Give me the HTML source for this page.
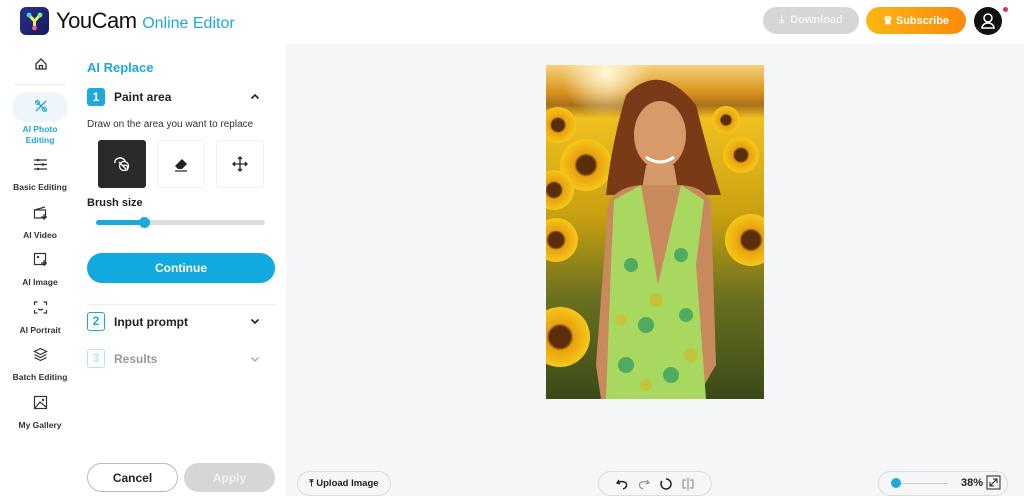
<!DOCTYPE html>
<html><head><style>
*{box-sizing:border-box;margin:0;padding:0}
body{width:1024px;height:496px;overflow:hidden;background:#fff;font-family:"Liberation Sans",sans-serif;position:relative;color:#222}
.abs{position:absolute}
.nav{position:absolute;left:0;width:80px;text-align:center;font-size:8.5px;font-weight:bold;color:#333}
.btn{position:absolute;border-radius:16px;display:flex;align-items:center;justify-content:center;font-weight:bold}
</style></head><body>
<div class="abs" style="left:20px;top:7px;width:29px;height:28px;border-radius:6px;background:linear-gradient(135deg,#2b2f8f,#151a5a)"></div>
<svg class="abs" style="left:20px;top:7px" width="29" height="28"><path d="M9 8 L14.5 14 L20 8 M14.5 14 V21" stroke="#e8f060" stroke-width="3" stroke-linecap="round" fill="none"/><circle cx="9" cy="8" r="2.4" fill="#3fd4e8"/><circle cx="20" cy="8" r="2.4" fill="#7cf07a"/><circle cx="14.5" cy="21" r="2.4" fill="#f05aa0"/></svg>
<div class="abs" style="left:56px;top:8px;font-size:22px;color:#111;letter-spacing:-0.5px">YouCam <span style="font-size:16px;color:#1ea8dc;letter-spacing:0">Online Editor</span></div>
<div class="btn" style="left:763px;top:7px;width:96px;height:27px;background:#d6d6d6;color:#f4f4f4;font-size:11px">⤓&nbsp; Download</div>
<div class="btn" style="left:866px;top:7px;width:100px;height:27px;background:linear-gradient(90deg,#fdb515,#fd8a0a);color:#fff;font-size:11px">♛&nbsp;Subscribe</div>
<div class="abs" style="left:974px;top:7px;width:28px;height:28px;border-radius:50%;background:#111"></div>
<svg class="abs" style="left:974px;top:7px" width="28" height="28"><circle cx="14" cy="11" r="4" stroke="#fff" stroke-width="1.5" fill="none"/><path d="M8 21 a6 5 0 0 1 12 0 Z" stroke="#fff" stroke-width="1.5" fill="none"/></svg>
<div class="abs" style="left:1003px;top:7px;width:5px;height:5px;border-radius:50%;background:#e0306a"></div>
<svg class="abs" style="left:34px;top:57px" width="14" height="14"><path d="M2 7 L7 2 L12 7 V12 H2 Z M5.5 12 V8.5 H8.5 V12" stroke="#333" stroke-width="1.3" fill="none"/></svg>
<div class="abs" style="left:14px;top:84px;width:52px;height:1px;background:#eee"></div>
<div class="abs" style="left:12px;top:92px;width:56px;height:30px;border-radius:15px;background:#eef6fb"></div>
<svg class="abs" style="left:34px;top:99px" width="14" height="14"><path d="M2 2 L12 12 M12 2 L2 12" stroke="#1ea8dc" stroke-width="1.3"/><circle cx="3.5" cy="3.5" r="2" stroke="#1ea8dc" fill="none"/><circle cx="10.5" cy="10.5" r="2" stroke="#1ea8dc" fill="none"/></svg>
<div class="nav" style="top:124px;color:#1ea8dc;line-height:11px">AI Photo<br>Editing</div>
<svg class="abs" style="left:33px;top:157px" width="15" height="15"><path d="M1 3H14M1 7.5H14M1 12H14" stroke="#333" stroke-width="1.2"/><circle cx="5" cy="3" r="1.3" fill="#333"/><circle cx="10" cy="7.5" r="1.3" fill="#333"/><circle cx="5" cy="12" r="1.3" fill="#333"/></svg>
<div class="nav" style="top:182px">Basic Editing</div>
<svg class="abs" style="left:33px;top:205px" width="15" height="15"><rect x="1.5" y="5" width="11" height="8" stroke="#333" fill="none" stroke-width="1.2"/><path d="M1.5 5 L12 2 M11 9 v6 M8 12 h6" stroke="#333" stroke-width="1.2"/></svg>
<div class="nav" style="top:230px">AI Video</div>
<svg class="abs" style="left:33px;top:252px" width="15" height="15"><rect x="1.5" y="1.5" width="11" height="11" stroke="#333" fill="none" stroke-width="1.2"/><circle cx="5" cy="5" r="1.2" fill="#333"/><path d="M11 8 v6 M8 11 h6" stroke="#333" stroke-width="1.3"/></svg>
<div class="nav" style="top:277px">AI Image</div>
<svg class="abs" style="left:33px;top:300px" width="15" height="15"><path d="M1.5 5V2H4.5M10.5 2H13.5V5M13.5 10V13H10.5M4.5 13H1.5V10M5 9 q2.5 2 5 0" stroke="#333" fill="none" stroke-width="1.2"/></svg>
<div class="nav" style="top:325px">AI Portrait</div>
<svg class="abs" style="left:33px;top:347px" width="15" height="15"><path d="M7.5 1.5 L13.5 4.5 L7.5 7.5 L1.5 4.5 Z M1.5 7.5 L7.5 10.5 L13.5 7.5 M1.5 10.5 L7.5 13.5 L13.5 10.5" stroke="#333" fill="none" stroke-width="1.2"/></svg>
<div class="nav" style="top:372px">Batch Editing</div>
<svg class="abs" style="left:33px;top:395px" width="15" height="15"><rect x="1.5" y="1.5" width="12" height="12" stroke="#333" fill="none" stroke-width="1.2"/><path d="M2 13 L7 7 L13 12" stroke="#333" fill="none" stroke-width="1.2"/><circle cx="10" cy="5" r="1.2" fill="#333"/></svg>
<div class="nav" style="top:420px">My Gallery</div>
<div class="abs" style="left:87px;top:60px;font-size:13px;font-weight:bold;color:#1ea8dc">AI Replace</div>
<div class="abs" style="left:87px;top:88px;width:18px;height:18px;border-radius:3px;background:#1ea8dc;color:#fff;font-size:12px;font-weight:bold;text-align:center;line-height:18px">1</div>
<div class="abs" style="left:114px;top:90px;font-size:12px;font-weight:bold">Paint area</div>
<svg class="abs" style="left:250px;top:93px" width="10" height="7"><path d="M1.5 5.5 L5 2 L8.5 5.5" stroke="#222" stroke-width="1.6" fill="none"/></svg>
<div class="abs" style="left:87px;top:119px;font-size:10px;color:#333">Draw on the area you want to replace</div>
<div class="abs" style="left:98px;top:140px;width:48px;height:48px;border-radius:3px;background:#2a2a2a"></div>
<svg class="abs" style="left:112px;top:154px" width="20" height="20"><path d="M3 9 a5 4 0 0 1 10 -2 M7 8 L15 16 a2.5 2.5 0 0 0 -4 -4 z" stroke="#fff" stroke-width="1.4" fill="none"/><circle cx="12" cy="12" r="4.5" stroke="#fff" stroke-width="1.3" fill="none"/></svg>
<div class="abs" style="left:157px;top:140px;width:48px;height:48px;border-radius:3px;border:1px solid #f0f0f0"></div>
<svg class="abs" style="left:172px;top:155px" width="18" height="18"><path d="M3 11 L10 4 L15 9 L10 14 H6 Z" fill="#222"/><path d="M3 16 H15" stroke="#222" stroke-width="1.2"/></svg>
<div class="abs" style="left:216px;top:140px;width:48px;height:48px;border-radius:3px;border:1px solid #f0f0f0"></div>
<svg class="abs" style="left:231px;top:155px" width="18" height="18"><path d="M9 2 V16 M2 9 H16 M7 4 L9 2 L11 4 M7 14 L9 16 L11 14 M4 7 L2 9 L4 11 M14 7 L16 9 L14 11" stroke="#222" stroke-width="1.3" fill="none"/></svg>
<div class="abs" style="left:87px;top:197px;font-size:11px;font-weight:bold">Brush size</div>
<div class="abs" style="left:96px;top:220px;width:169px;height:5px;border-radius:3px;background:#ddd"></div>
<div class="abs" style="left:96px;top:220px;width:50px;height:5px;border-radius:3px;background:#1ea8dc"></div>
<div class="abs" style="left:139px;top:217px;width:11px;height:11px;border-radius:50%;background:#1ea8dc"></div>
<div class="btn" style="left:87px;top:253px;width:188px;height:30px;border-radius:15px;background:#12a9e0;color:#fff;font-size:12px">Continue</div>
<div class="abs" style="left:87px;top:304px;width:189px;height:1px;background:#eee"></div>
<div class="abs" style="left:87px;top:312px;width:18px;height:19px;border-radius:3px;border:1.5px solid #1ea8dc;color:#1ea8dc;font-size:12px;font-weight:bold;text-align:center;line-height:16px">2</div>
<div class="abs" style="left:114px;top:315px;font-size:12px;font-weight:bold">Input prompt</div>
<svg class="abs" style="left:250px;top:318px" width="10" height="7"><path d="M1.5 1.5 L5 5 L8.5 1.5" stroke="#222" stroke-width="1.6" fill="none"/></svg>
<div class="abs" style="left:87px;top:349px;width:18px;height:19px;border-radius:3px;border:1.5px solid #b8e2f3;color:#b8e2f3;font-size:12px;font-weight:bold;text-align:center;line-height:16px">3</div>
<div class="abs" style="left:114px;top:352px;font-size:12px;font-weight:bold;color:#999">Results</div>
<svg class="abs" style="left:250px;top:356px" width="10" height="7"><path d="M1.5 1.5 L5 5 L8.5 1.5" stroke="#aaa" stroke-width="1.4" fill="none"/></svg>
<div class="btn" style="left:87px;top:463px;width:91px;height:29px;border:1px solid #bbb;background:#fff;color:#222;font-size:12px;border-radius:15px">Cancel</div>
<div class="btn" style="left:184px;top:463px;width:91px;height:29px;background:#d6d6d6;color:#f0f0f0;font-size:12px;border-radius:15px">Apply</div>
<div class="abs" style="left:286px;top:44px;width:738px;height:452px;background:#f5f6f8"></div>
<svg class="abs" style="left:546px;top:65px" width="218" height="334" viewBox="0 0 218 334">
<defs><linearGradient id="bg" x1="0" y1="0" x2="0" y2="1"><stop offset="0" stop-color="#f5d27a"/><stop offset="0.08" stop-color="#d9931e"/><stop offset="0.12" stop-color="#a8701a"/><stop offset="0.16" stop-color="#f0c020"/><stop offset="0.45" stop-color="#c8a010"/><stop offset="0.7" stop-color="#6a7020"/><stop offset="1" stop-color="#3a4a18"/></linearGradient>
<radialGradient id="sf"><stop offset="0.35" stop-color="#5a2e08"/><stop offset="0.45" stop-color="#e8a010"/><stop offset="1" stop-color="#f5c818"/></radialGradient>
<radialGradient id="sun"><stop offset="0" stop-color="#fff8d8"/><stop offset="1" stop-color="#fff8d8" stop-opacity="0"/></radialGradient></defs>
<rect width="218" height="334" fill="url(#bg)"/>
<circle cx="60" cy="8" r="45" fill="url(#sun)"/>
<circle cx="40" cy="100" r="26" fill="url(#sf)"/><circle cx="12" cy="60" r="18" fill="url(#sf)"/><circle cx="8" cy="125" r="20" fill="url(#sf)"/>
<circle cx="195" cy="90" r="18" fill="url(#sf)"/><circle cx="180" cy="55" r="14" fill="url(#sf)"/>
<circle cx="10" cy="175" r="22" fill="url(#sf)"/><circle cx="205" cy="175" r="26" fill="url(#sf)"/><circle cx="14" cy="272" r="30" fill="url(#sf)"/>
<path d="M80 30 Q114 -5 150 40 Q165 100 175 130 L60 130 Q65 80 80 30Z" fill="#7a3a18"/>
<ellipse cx="114" cy="70" rx="26" ry="34" fill="#d99a6a"/>
<path d="M100 92 q14 10 28 0" stroke="#fff" stroke-width="3" fill="none"/>
<path d="M100 100 L128 100 L132 125 L96 125Z" fill="#d49a6a"/>
<path d="M62 140 Q70 120 100 120 L130 120 Q160 120 165 140 L170 300 L150 334 L55 334 L50 300Z" fill="#c88a5c"/>
<path d="M68 135 L95 120 L112 220 L135 120 L158 135 L150 200 L160 334 L60 334 L65 200 Z" fill="#a8d860"/>
<g fill="#3aa060" opacity="0.8"><circle cx="85" cy="200" r="7"/><circle cx="135" cy="190" r="7"/><circle cx="100" cy="260" r="8"/><circle cx="140" cy="250" r="7"/><circle cx="80" cy="300" r="8"/><circle cx="125" cy="310" r="8"/></g>
<g fill="#c8c030" opacity="0.8"><circle cx="110" cy="235" r="7"/><circle cx="75" cy="255" r="6"/><circle cx="145" cy="290" r="7"/><circle cx="100" cy="320" r="6"/></g>
</svg>
<div class="btn" style="left:297px;top:471px;width:94px;height:25px;border:1px solid #ddd;background:#f5f6f8;font-size:9.5px;color:#222;border-radius:13px">⤒&nbsp;Upload Image</div>
<div class="btn" style="left:598px;top:471px;width:114px;height:25px;border:1px solid #ddd;background:#f5f6f8;border-radius:13px;gap:8px;font-size:14px;color:#222">
<svg width="14" height="14"><path d="M4 3 L2 6 L5 7 M2.5 6 Q7 3 11 6 Q13 10 8 12" stroke="#222" stroke-width="1.4" fill="none"/></svg>
<svg width="14" height="14"><path d="M10 3 L12 6 L9 7 M11.5 6 Q7 3 3 6 Q1 10 6 12" stroke="#999" stroke-width="1.3" fill="none"/></svg>
<svg width="14" height="14"><path d="M7 2 A5 5 0 1 1 3 4" stroke="#222" stroke-width="1.5" fill="none"/></svg>
<svg width="14" height="14"><path d="M7 1 V13 M5 3 H2 V11 H5 M9 3 H12 V11 H9" stroke="#999" stroke-width="1.2" fill="none"/></svg></div>
<div class="abs" style="left:878px;top:471px;width:130px;height:25px;border:1px solid #ddd;background:#f5f6f8;border-radius:13px"></div>
<div class="abs" style="left:900px;top:483px;width:48px;height:1px;background:#ccc"></div>
<div class="abs" style="left:891px;top:478px;width:10px;height:10px;border-radius:50%;background:#1ea8dc"></div>
<div class="abs" style="left:961px;top:477px;font-size:11px;font-weight:bold">38%</div>
<svg class="abs" style="left:986px;top:475px" width="15" height="15"><rect x="1" y="1" width="13" height="13" stroke="#222" fill="none"/><path d="M4 11 L11 4 M7 4 H11 V8 M4 7 V11 H8" stroke="#222" fill="none"/></svg>
</body></html>
